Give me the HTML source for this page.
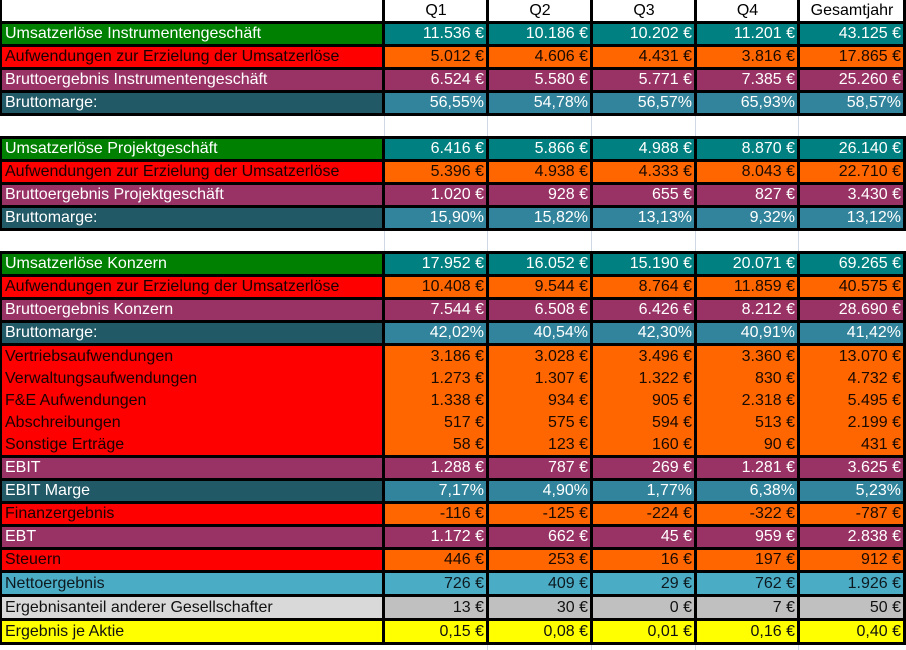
<!DOCTYPE html>
<html><head><meta charset="utf-8"><style>
body{margin:0;width:906px;height:650px;background:#fff;position:relative;overflow:hidden;font-family:"Liberation Sans",Arial,sans-serif;font-size:16px}
.r{position:absolute;left:0;width:906px;background:#000;display:grid;grid-template-columns:380px 101px 101px 101px 100px 103px;column-gap:3px;padding:3px 0 0 2px;box-sizing:border-box}
.r div{padding:0 3px;white-space:nowrap;overflow:hidden;display:flex;align-items:center}
.r div+div{justify-content:flex-end;padding-right:2px}
.b{padding-bottom:3px!important}
.h{background:#fff;padding-top:0}
.h div{background:#fff;justify-content:center!important;color:#000}
.g div:first-child{background:#008000;color:#fff}.g div+div{background:#008080;color:#fff}
.a div:first-child{background:#ff0000;color:#1a0000}.a div+div{background:#ff6600;color:#1a0a00}
.p div{background:#993366;color:#fff}
.m div:first-child{background:#215967;color:#fff}.m div+div{background:#31849b;color:#fff}
.n div{background:#4bacc6;color:#0d1a20}
.s div:first-child{background:#d9d9d9;color:#111}.s div+div{background:#c0c0c0;color:#111}
.y div{background:#ffff00;color:#111}
.x div{display:block;line-height:22px;padding-top:0}
.x div+div{text-align:right}
.gl{position:absolute;width:1px;background:#d0d7e5}
</style></head><body>
<div class="gl" style="left:487px;top:116px;height:20px"></div><div class="gl" style="left:591px;top:116px;height:20px"></div><div class="gl" style="left:695px;top:116px;height:20px"></div><div class="gl" style="left:798px;top:116px;height:20px"></div><div class="gl" style="left:384px;top:116px;height:20px"></div>
<div class="gl" style="left:487px;top:231px;height:20px"></div><div class="gl" style="left:591px;top:231px;height:20px"></div><div class="gl" style="left:695px;top:231px;height:20px"></div><div class="gl" style="left:798px;top:231px;height:20px"></div><div class="gl" style="left:384px;top:231px;height:20px"></div>
<div class="gl" style="left:487px;top:645px;height:5px"></div><div class="gl" style="left:591px;top:645px;height:5px"></div><div class="gl" style="left:695px;top:645px;height:5px"></div><div class="gl" style="left:798px;top:645px;height:5px"></div>
<div class="r h" style="top:0;height:21px;background:#000"><div style="background:#fff"></div><div>Q1</div><div>Q2</div><div>Q3</div><div>Q4</div><div>Gesamtjahr</div></div>

<div class="r g" style="top:21px;height:23px"><div>Umsatzerlöse Instrumentengeschäft</div><div>11.536 €</div><div>10.186 €</div><div>10.202 €</div><div>11.201 €</div><div>43.125 €</div></div>
<div class="r a" style="top:44px;height:23px"><div>Aufwendungen zur Erzielung der Umsatzerlöse</div><div>5.012 €</div><div>4.606 €</div><div>4.431 €</div><div>3.816 €</div><div>17.865 €</div></div>
<div class="r p" style="top:67px;height:23px"><div>Bruttoergebnis Instrumentengeschäft</div><div>6.524 €</div><div>5.580 €</div><div>5.771 €</div><div>7.385 €</div><div>25.260 €</div></div>
<div class="r m b" style="top:90px;height:26px"><div>Bruttomarge:</div><div>56,55%</div><div>54,78%</div><div>56,57%</div><div>65,93%</div><div>58,57%</div></div>

<div class="r g" style="top:136px;height:23px"><div>Umsatzerlöse Projektgeschäft</div><div>6.416 €</div><div>5.866 €</div><div>4.988 €</div><div>8.870 €</div><div>26.140 €</div></div>
<div class="r a" style="top:159px;height:23px"><div>Aufwendungen zur Erzielung der Umsatzerlöse</div><div>5.396 €</div><div>4.938 €</div><div>4.333 €</div><div>8.043 €</div><div>22.710 €</div></div>
<div class="r p" style="top:182px;height:23px"><div>Bruttoergebnis Projektgeschäft</div><div>1.020 €</div><div>928 €</div><div>655 €</div><div>827 €</div><div>3.430 €</div></div>
<div class="r m b" style="top:205px;height:26px"><div>Bruttomarge:</div><div>15,90%</div><div>15,82%</div><div>13,13%</div><div>9,32%</div><div>13,12%</div></div>

<div class="r g" style="top:251px;height:23px"><div>Umsatzerlöse Konzern</div><div>17.952 €</div><div>16.052 €</div><div>15.190 €</div><div>20.071 €</div><div>69.265 €</div></div>
<div class="r a" style="top:274px;height:23px"><div>Aufwendungen zur Erzielung der Umsatzerlöse</div><div>10.408 €</div><div>9.544 €</div><div>8.764 €</div><div>11.859 €</div><div>40.575 €</div></div>
<div class="r p" style="top:297px;height:23px"><div>Bruttoergebnis Konzern</div><div>7.544 €</div><div>6.508 €</div><div>6.426 €</div><div>8.212 €</div><div>28.690 €</div></div>
<div class="r m" style="top:320px;height:23px"><div>Bruttomarge:</div><div>42,02%</div><div>40,54%</div><div>42,30%</div><div>40,91%</div><div>41,42%</div></div>
<div class="r a x" style="top:343px;height:112px"><div>Vertriebsaufwendungen<br>Verwaltungsaufwendungen<br>F&amp;E Aufwendungen<br>Abschreibungen<br>Sonstige Erträge</div><div>3.186 €<br>1.273 €<br>1.338 €<br>517 €<br>58 €</div><div>3.028 €<br>1.307 €<br>934 €<br>575 €<br>123 €</div><div>3.496 €<br>1.322 €<br>905 €<br>594 €<br>160 €</div><div>3.360 €<br>830 €<br>2.318 €<br>513 €<br>90 €</div><div>13.070 €<br>4.732 €<br>5.495 €<br>2.199 €<br>431 €</div></div>
<div class="r p" style="top:455px;height:23px"><div>EBIT</div><div>1.288 €</div><div>787 €</div><div>269 €</div><div>1.281 €</div><div>3.625 €</div></div>
<div class="r m" style="top:478px;height:23px"><div>EBIT Marge</div><div>7,17%</div><div>4,90%</div><div>1,77%</div><div>6,38%</div><div>5,23%</div></div>
<div class="r a" style="top:501px;height:23px"><div>Finanzergebnis</div><div>-116 €</div><div>-125 €</div><div>-224 €</div><div>-322 €</div><div>-787 €</div></div>
<div class="r p" style="top:524px;height:23px"><div>EBT</div><div>1.172 €</div><div>662 €</div><div>45 €</div><div>959 €</div><div>2.838 €</div></div>
<div class="r a" style="top:547px;height:23px"><div>Steuern</div><div>446 €</div><div>253 €</div><div>16 €</div><div>197 €</div><div>912 €</div></div>
<div class="r n" style="top:570px;height:24px"><div>Nettoergebnis</div><div>726 €</div><div>409 €</div><div>29 €</div><div>762 €</div><div>1.926 €</div></div>
<div class="r s" style="top:594px;height:24px"><div>Ergebnisanteil anderer Gesellschafter</div><div>13 €</div><div>30 €</div><div>0 €</div><div>7 €</div><div>50 €</div></div>
<div class="r y b" style="top:618px;height:27px"><div>Ergebnis je Aktie</div><div>0,15 €</div><div>0,08 €</div><div>0,01 €</div><div>0,16 €</div><div>0,40 €</div></div>
</body></html>
